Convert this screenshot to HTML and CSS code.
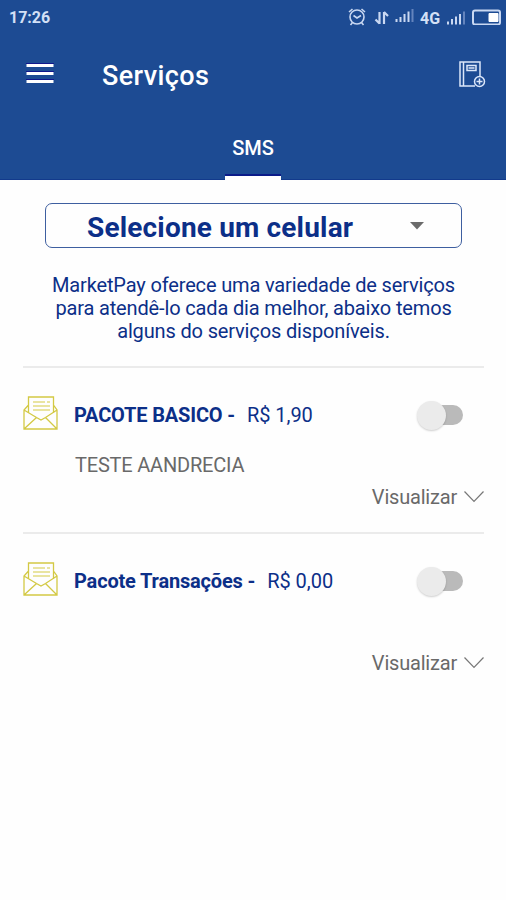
FILE: index.html
```html
<!DOCTYPE html>
<html lang="pt-BR">
<head>
<meta charset="utf-8">
<title>Serviços</title>
<link rel="stylesheet" href="styles.css">
</head>
<body>
<header class="header">
  <div class="status">
    <span class="clock">17:26</span>
    <svg class="status-icons" width="82" height="24" viewBox="-4 0 82 24" fill="none" stroke="#c9d8f2" stroke-width="1.6">
      <circle cx="15" cy="13" r="7"/>
      <path d="M11.5 11.5l3.5 2.5 4-2.5M7 8l3.500-3M19.500 5L23 8M10.500 18.500L8.500 21M19.500 18.500l2 2.500"/>
      <path d="M37.500 8v12M33.500 15.500l4 4M42 20V8M42 8l4 4" stroke-width="2.200"/>
      <path d="M54.500 15v3M58.500 13v5M62.500 10v8M66.500 7.500v10.500" stroke-width="2"/>
      <path d="M70.500 5v13" stroke="#6484bd" stroke-width="2"/>
    </svg>
    <span class="network">4G</span>
    <svg class="status-icons" width="60" height="24" viewBox="0 0 60 24" fill="none" stroke="#c9d8f2" stroke-width="2">
      <path d="M7 20.500v3M11 18v5.500M15 15.500v8M19 13v10.500"/>
      <path d="M23 10.500v13" stroke="#6484bd"/>
      <rect x="32" y="9.500" width="27" height="14" rx="2"/>
      <path d="M48 12.500h9v8h-9z" fill="#fff" stroke="#fff" stroke-width="1"/>
    </svg>
  </div>
  <div class="appbar">
    <svg class="menu" width="28" height="22" viewBox="0 0 28 22">
      <path d="M0 .5h28M0 8.500h28M0 16.500h28" stroke="#10188c" stroke-width="1"/>
      <path d="M.5 2.500h27M.5 10.500h27M.5 18.500h27" stroke="#fff" stroke-width="3"/>
    </svg>
    <h1 class="title">Serviços</h1>
    <svg class="add-note" width="28" height="30" viewBox="0 0 28 30" fill="none" stroke="#dce7fa" stroke-width="1.500">
      <path d="M22 17V2H2v24h15M5.500 2v24"/>
      <path d="M9 5.500h9v5H9zM10.500 8h6"/>
      <circle cx="21.500" cy="21.500" r="5"/>
      <path d="M18.500 21.500h6M21.500 18.500v6"/>
    </svg>
  </div>
  <nav class="tabs"><a class="tab">SMS</a></nav>
</header>
<main class="content">
  <div class="select">
    <span class="select-label">Selecione um celular</span>
    <svg width="14" height="8" viewBox="0 0 14 8"><path d="M0 0h14L7 7.500z" fill="#6b6b6b"/></svg>
  </div>
  <p class="intro"><span>MarketPay oferece uma variedade de serviços</span><span>para atendê-lo cada dia melhor, abaixo temos</span><span>alguns do serviços disponíveis.</span></p>

  <section class="package">
    <div class="head">
      <svg class="mail" width="36" height="34" viewBox="0 0 36 34" fill="none" stroke="#d3c944" stroke-width="1.300">
        <path d="M5.500 17V1h25v16M5.500 9L1 14v19h33V14l-3.500-5M1 14l12.500 7.500 4.500 2.500 4.500-2.500L34 14M1 33l12.500-11.500M34 33L22.500 21.500"/>
        <path d="M10 6h12M24 6h3M10 10h17M10 14h17" stroke-width="1.100"/>
      </svg>
      <b class="name">PACOTE BASICO -</b>
      <span class="price">R$ 1,90</span>
      <span class="switch"></span>
    </div>
    <p class="detail">TESTE AANDRECIA</p>
    <div class="view"><span class="view-label">Visualizar</span>
      <svg width="20" height="12" viewBox="0 0 20 12"><path d="M.5 .5L10 10.500l9.500-10" fill="none" stroke="#777" stroke-width="1.200"/></svg>
    </div>
  </section>

  <section class="package">
    <div class="head">
      <svg class="mail" width="36" height="34" viewBox="0 0 36 34" fill="none" stroke="#d3c944" stroke-width="1.300">
        <path d="M5.500 17V1h25v16M5.500 9L1 14v19h33V14l-3.500-5M1 14l12.500 7.500 4.500 2.500 4.500-2.500L34 14M1 33l12.500-11.500M34 33L22.500 21.500"/>
        <path d="M10 6h12M24 6h3M10 10h17M10 14h17" stroke-width="1.100"/>
      </svg>
      <b class="name">Pacote Transações -</b>
      <span class="price">R$ 0,00</span>
      <span class="switch"></span>
    </div>
    <p class="detail"></p>
    <div class="view"><span class="view-label">Visualizar</span>
      <svg width="20" height="12" viewBox="0 0 20 12"><path d="M.5 .5L10 10.500l9.500-10" fill="none" stroke="#777" stroke-width="1.200"/></svg>
    </div>
  </section>
</main>
</body>
</html>
```
FILE: styles.css
```css
* { box-sizing: border-box; }
body {
  margin: 0;
  background: #fefefe;
  font-family: Roboto, "Liberation Sans", sans-serif;
  color: #0c2f88;
}
h1, p { margin: 0; }
svg { flex: none; display: block; }

.header {
  height: 180px;
  background: #1d4b93;
  border-bottom: 1px solid #123a8c;
  color: #fff;
}
.status {
  height: 36px;
  display: flex;
  padding: 0 5px 0 9px;
  color: #d3e0f6;
}
.clock {
  font-size: 16px;
  font-weight: 700;
  line-height: 36px;
  margin-right: auto;
}
.status-icons { margin-top: 4px; }
.status-icons:last-child { margin-top: 1px; }
.network {
  font-size: 16px;
  font-weight: 700;
  line-height: 37px;
  width: 21px;
}
.appbar {
  height: 78px;
  display: flex;
  align-items: center;
  padding: 0 20px 0 26px;
}
.menu { margin-top: -3px; }
.title {
  font-size: 27px;
  font-weight: 500;
  line-height: 32px;
  letter-spacing: .4px;
  margin: 2px 0 0 48px;
}
.add-note { margin: -1px 0 0 auto; }
.tabs {
  height: 66px;
  display: flex;
  justify-content: center;
}
.tab {
  width: 56px;
  font-size: 20px;
  font-weight: 500;
  line-height: 68px;
  text-align: center;
  white-space: nowrap;
  box-shadow: inset 0 -4px #fff, inset 0 -6px #0b1c89;
  height: 66px;
}

.content { padding: 23px 22px 0 23px; }
.select {
  width: 417px;
  height: 45px;
  margin-left: 22px;
  padding: 0 37px 0 41px;
  border: 1px solid #3e5fa0;
  border-radius: 7px;
  display: flex;
  align-items: center;
  justify-content: space-between;
}
.select-label {
  font-size: 28px;
  font-weight: 700;
  line-height: 36px;
  letter-spacing: .17px;
  white-space: nowrap;
  margin-top: 4px;
}
.intro {
  height: 118px;
  padding-top: 26px;
  display: flex;
  flex-direction: column;
  align-items: center;
  font-size: 20px;
  line-height: 23px;
  letter-spacing: -.15px;
  white-space: nowrap;
}
.package {
  height: 166px;
  border-top: 2px solid #ebebeb;
  display: flex;
  flex-direction: column;
}
.head {
  display: flex;
  align-items: center;
  height: 48px;
  margin-top: 23px;
  white-space: nowrap;
}
.mail { margin-top: -4px; }
.name {
  font-size: 20px;
  font-weight: 700;
  letter-spacing: -.17px;
  margin-left: 15px;
}
.price {
  font-size: 20px;
  letter-spacing: -.05px;
  margin-left: 12px;
}
.switch {
  width: 46px;
  height: 30px;
  margin: 0 21px 0 auto;
  display: grid;
  align-items: center;
}
.switch::before,
.switch::after {
  content: "";
  grid-area: 1 / 1;
}
.switch::before {
  width: 36px;
  height: 20px;
  justify-self: end;
  border-radius: 10px;
  background: #bababa;
}
.switch::after {
  width: 29px;
  height: 29px;
  border-radius: 50%;
  background: #ebebeb;
  box-shadow: 0 1px 2px #00000030;
}
.detail {
  height: 34px;
  margin: 9px 0 0 52px;
  font-size: 20px;
  line-height: 34px;
  letter-spacing: -.2px;
  color: #696969;
}
.view {
  display: flex;
  align-items: center;
  justify-content: flex-end;
  gap: 7px;
  height: 30px;
  font-size: 20px;
  letter-spacing: -.2px;
  color: #696969;
}
```
